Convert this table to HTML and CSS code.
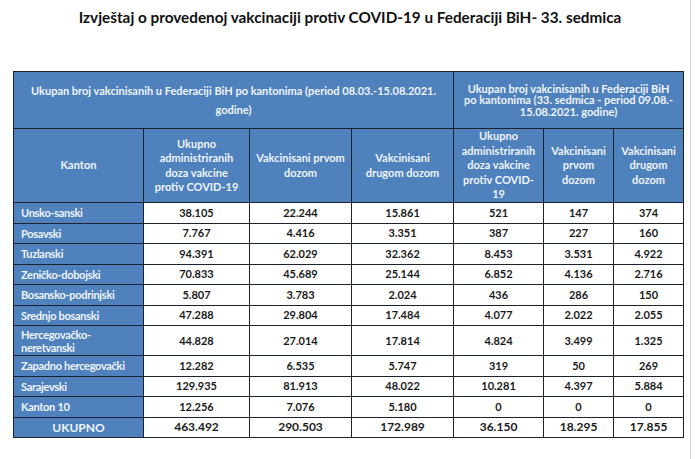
FILE: index.html
```html
<!DOCTYPE html>
<html lang="bs">
<head>
<meta charset="utf-8">
<title>Izvještaj o vakcinaciji</title>
<link rel="stylesheet" href="styles.css">
</head>
<body>
<div class="page">
  <h1 class="title">Izvještaj o provedenoj vakcinaciji protiv COVID-19 u Federaciji BiH- 33. sedmica</h1>
  <table class="report">
    <colgroup>
      <col class="c-name"><col class="c-total"><col class="c-n"><col class="c-n"><col class="c-wtotal"><col class="c-w"><col class="c-w">
    </colgroup>
    <thead>
      <tr class="r-group">
        <th colspan="4" class="g-left">Ukupan broj vakcinisanih u Federaciji BiH po kantonima (period 08.03.-15.08.2021.<br>godine)</th>
        <th colspan="3" class="g-right">Ukupan broj vakcinisanih u Federaciji BiH<br>po kantonima (33. sedmica - period 09.08.-<br>15.08.2021. godine)</th>
      </tr>
      <tr class="r-cols">
        <th>Kanton</th>
        <th>Ukupno<br>administriranih<br>doza vakcine<br>protiv COVID-19</th>
        <th>Vakcinisani prvom<br>dozom</th>
        <th>Vakcinisani<br>drugom dozom</th>
        <th>Ukupno<br>administriranih<br>doza vakcine<br>protiv COVID-<br>19</th>
        <th>Vakcinisani<br>prvom<br>dozom</th>
        <th>Vakcinisani<br>drugom<br>dozom</th>
      </tr>
    </thead>
    <tbody>
      <tr><th class="name">Unsko-sanski</th><td>38.105</td><td>22.244</td><td>15.861</td><td>521</td><td>147</td><td>374</td></tr>
      <tr><th class="name">Posavski</th><td>7.767</td><td>4.416</td><td>3.351</td><td>387</td><td>227</td><td>160</td></tr>
      <tr><th class="name">Tuzlanski</th><td>94.391</td><td>62.029</td><td>32.362</td><td>8.453</td><td>3.531</td><td>4.922</td></tr>
      <tr><th class="name">Zeničko-dobojski</th><td>70.833</td><td>45.689</td><td>25.144</td><td>6.852</td><td>4.136</td><td>2.716</td></tr>
      <tr><th class="name">Bosansko-podrinjski</th><td>5.807</td><td>3.783</td><td>2.024</td><td>436</td><td>286</td><td>150</td></tr>
      <tr><th class="name">Srednjo bosanski</th><td>47.288</td><td>29.804</td><td>17.484</td><td>4.077</td><td>2.022</td><td>2.055</td></tr>
      <tr class="tall"><th class="name">Hercegovačko-<br>neretvanski</th><td>44.828</td><td>27.014</td><td>17.814</td><td>4.824</td><td>3.499</td><td>1.325</td></tr>
      <tr><th class="name">Zapadno hercegovački</th><td>12.282</td><td>6.535</td><td>5.747</td><td>319</td><td>50</td><td>269</td></tr>
      <tr><th class="name">Sarajevski</th><td>129.935</td><td>81.913</td><td>48.022</td><td>10.281</td><td>4.397</td><td>5.884</td></tr>
      <tr><th class="name">Kanton 10</th><td>12.256</td><td>7.076</td><td>5.180</td><td>0</td><td>0</td><td>0</td></tr>
      <tr class="sum"><th class="name">UKUPNO</th><td>463.492</td><td>290.503</td><td>172.989</td><td>36.150</td><td>18.295</td><td>17.855</td></tr>
    </tbody>
  </table>
</div>
</body>
</html>
```

FILE: styles.css
```css
html, body {
  margin: 0;
  padding: 0;
  background: #ffffff;
}

.page {
  width: 691px;
  height: 459px;
  box-sizing: border-box;
  border-right: 1px solid #d6d6d6;
  padding-top: 7px;
  font-family: Lato, "Noto Sans", sans-serif;
  color: #1a1a1a;
}

.title {
  margin: 0 0 44px 0;
  font-size: 15.3px;
  line-height: 20px;
  font-weight: 700;
  text-align: center;
  width: 700px;
  color: #111;
}

.report {
  margin-left: 13px;
  width: 670px;
  table-layout: fixed;
  border-collapse: collapse;
  font-size: 11px;
  font-weight: 700;
  border: 1px solid #1b2330;
}

.c-name { width: 130px; }
.c-total { width: 106px; }
.c-n { width: 102px; }
.c-wtotal { width: 90px; }
.c-w { width: 70px; }

.report th,
.report td {
  border: 1px solid #1b2330;
  padding: 0 2px;
  text-align: center;
  vertical-align: middle;
}

.report thead th {
  background: #4f81bd;
  color: #eef4fc;
  font-weight: 700;
}

.r-group th {
  height: 56px;
}

.g-left {
  line-height: 19px;
  padding-bottom: 2px;
}

.g-right {
  line-height: 11.5px;
}

.r-cols th {
  height: 73px;
  line-height: 14.5px;
}

.report tbody tr {
  height: 20.5px;
}

.report tbody tr.tall {
  height: 30px;
}

.report tbody tr.tall .name {
  line-height: 13px;
}

.report .name {
  background: #4f81bd;
  color: #eef4fc;
  text-align: left;
  padding-left: 7px;
  font-weight: 700;
  letter-spacing: -0.3px;
}

.report td {
  background: #ffffff;
  color: #1a1a1a;
  line-height: 14px;
}

.report .sum .name {
  text-align: center;
  font-size: 12px;
  letter-spacing: 0;
  padding-left: 2px;
}

.report .sum td {
  font-size: 12px;
}
```
